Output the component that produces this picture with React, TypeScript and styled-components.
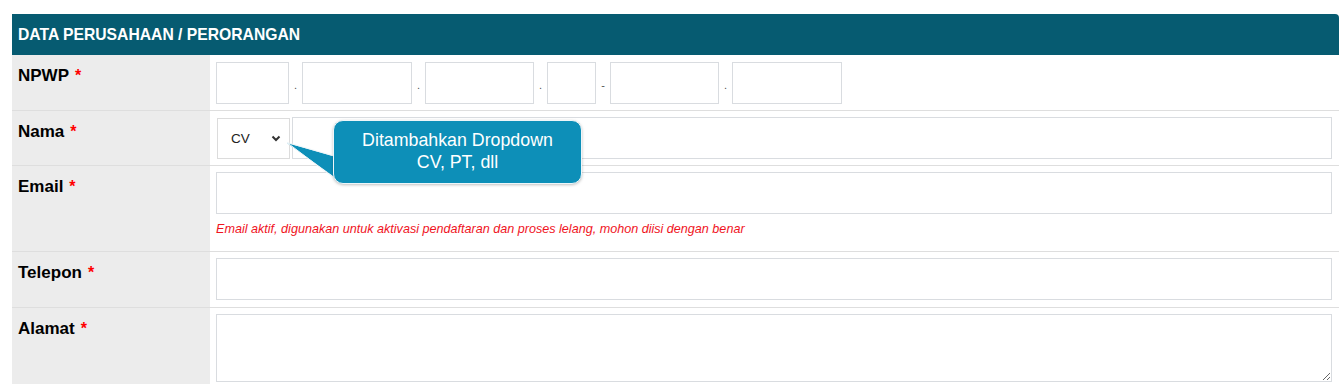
import React from "react"
import styled, { createGlobalStyle } from "styled-components"

const GlobalStyle = createGlobalStyle`
  body {
    margin: 0;
    background: #ffffff;
    font-family: "Liberation Sans", Arial, sans-serif;
  }
`

const Page = styled.div`
  padding: 14px 0 0 12px;
  overflow: hidden;
`

const Panel = styled.div`
  width: 1327px;
`

const PanelHeader = styled.div`
  height: 41px;
  background-color: #065b71;
  border-radius: 0 4px 0 0;
  color: #ffffff;
  font-size: 15.7px;
  font-weight: bold;
  display: flex;
  align-items: center;
  padding: 1px 6px 0;
  box-sizing: border-box;
`

const Row = styled.div`
  display: grid;
  grid-template-columns: 198px 1fr;
  border-bottom: 1px solid #dedede;
  position: relative;
`

const Label = styled.div`
  background-color: #ececec;
  padding: 10px 6px 8px;
  font-size: 17px;
  font-weight: bold;
  color: #000;
  line-height: 22px;

  span {
    color: #ff0000;
    margin-left: 6px;
    font-size: 16px;
  }
`

const Value = styled.div<{ $pt?: number; $pb?: number }>`
  padding: ${(p) => p.$pt ?? 6}px 7px ${(p) => p.$pb ?? 6}px 6px;
`

const InputLine = styled.div`
  display: flex;
  align-items: center;
`

const TextBox = styled.input<{ $w?: number }>`
  box-sizing: border-box;
  height: 42px;
  width: ${(p) => (p.$w ? `${p.$w}px` : "100%")};
  flex: ${(p) => (p.$w ? "none" : "1")};
  border: 1px solid #d9dce0;
  background: #fff;
  margin: 0;
  padding: 0 10px;
  outline: none;
`

const Sep = styled.span<{ $w: number }>`
  width: ${(p) => p.$w}px;
  flex: none;
  text-align: center;
  font-size: 11px;
  color: #555;
  padding-top: 4px;
`

const SelectBox = styled.div`
  box-sizing: border-box;
  width: 73px;
  height: 41px;
  margin: 1px 2px 0 1px;
  border: 1px solid #dcdcdc;
  display: flex;
  align-items: center;
  justify-content: space-between;
  padding: 0 8px 0 13px;
  font-size: 13.5px;
  color: #222;
  flex: none;
`

const HelpText = styled.div`
  margin-top: 8px;
  font-size: 12.6px;
  font-style: italic;
  color: #f0141e;
  line-height: 15px;
`

const TextArea = styled.textarea`
  box-sizing: border-box;
  display: block;
  width: 100%;
  height: 68px;
  border: 1px solid #d9dce0;
  margin: 0;
  resize: vertical;
  outline: none;
`

const Callout = styled.div`
  position: absolute;
  left: 321px;
  top: 9px;
  width: 249px;
  height: 64px;
  box-sizing: border-box;
  background-color: #0d8fb8;
  border: 1px solid #eef6f9;
  border-radius: 10px;
  box-shadow: 0 1px 3px rgba(0, 0, 0, 0.25);
  color: #ffffff;
  font-size: 17.8px;
  line-height: 22px;
  text-align: center;
  padding-top: 8px;
  z-index: 3;
`

const CalloutTail = styled.svg`
  position: absolute;
  left: 272px;
  top: 30px;
  z-index: 2;
  overflow: visible;
`

const npwpWidths = [73, 110, 109, 49, 109, 110]
const npwpSeps = [
  { ch: ".", w: 13 },
  { ch: ".", w: 13 },
  { ch: ".", w: 13 },
  { ch: "-", w: 14 },
  { ch: ".", w: 13 },
]

const App: React.FC = () => {
  return (
    <>
      <GlobalStyle />
      <Page>
        <Panel>
          <PanelHeader>DATA PERUSAHAAN / PERORANGAN</PanelHeader>

          <Row>
            <Label>
              NPWP<span>*</span>
            </Label>
            <Value $pt={7}>
              <InputLine>
                {npwpWidths.map((w, i) => (
                  <React.Fragment key={i}>
                    <TextBox $w={w} />
                    {i < npwpSeps.length && <Sep $w={npwpSeps[i].w}>{npwpSeps[i].ch}</Sep>}
                  </React.Fragment>
                ))}
              </InputLine>
            </Value>
          </Row>

          <Row>
            <Label>
              Nama<span>*</span>
            </Label>
            <Value>
              <InputLine>
                <SelectBox>
                  CV
                  <svg width="10" height="7" viewBox="0 0 10 7">
                    <path d="M1.5 1.5 L5 5 L8.5 1.5" fill="none" stroke="#333" strokeWidth="2" />
                  </svg>
                </SelectBox>
                <TextBox />
              </InputLine>
            </Value>
            <CalloutTail width="60" height="40">
              <polygon points="3,2 56,17 56,40" fill="#0d8fb8" />
              <polyline points="50,15 3,1.5 50,37" fill="none" stroke="#eef6f9" strokeWidth="1" />
            </CalloutTail>
            <Callout>
              Ditambahkan Dropdown
              <br />
              CV, PT, dll
            </Callout>
          </Row>

          <Row>
            <Label>
              Email<span>*</span>
            </Label>
            <Value $pb={14}>
              <TextBox />
              <HelpText>
                Email aktif, digunakan untuk aktivasi pendaftaran dan proses lelang, mohon diisi dengan benar
              </HelpText>
            </Value>
          </Row>

          <Row>
            <Label>
              Telepon<span>*</span>
            </Label>
            <Value $pt={6} $pb={7}>
              <TextBox />
            </Value>
          </Row>

          <Row>
            <Label>
              Alamat<span>*</span>
            </Label>
            <Value>
              <TextArea />
            </Value>
          </Row>
        </Panel>
      </Page>
    </>
  )
}

export default App
